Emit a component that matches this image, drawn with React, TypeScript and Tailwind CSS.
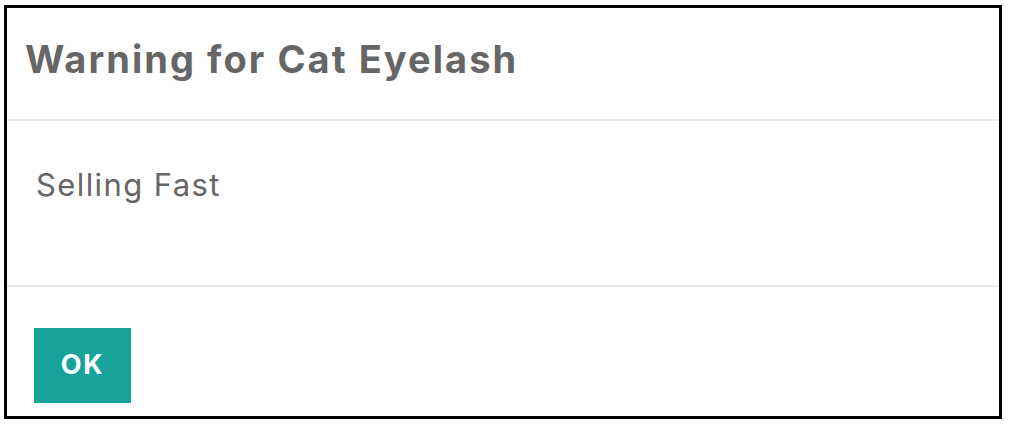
/**
 * Warning dialog — single alert card with title, message and OK action.
 */
export default function App() {
  return (
    <div className="h-[428px] w-[1012px] bg-white pl-[4px] pt-[5px] font-['Inter',sans-serif]">
      <div className="flex h-[414px] w-[998px] flex-col border-[3px] border-black bg-white">
        {/* Header */}
        <div className="h-[113px] border-b-2 border-[#e6e7eb] pl-[18px] pt-[27px]">
          <h1 className="text-[38px] font-bold leading-[48px] tracking-[0.054em] text-[#666666]">
            Warning for Cat Eyelash
          </h1>
        </div>

        {/* Body */}
        <div className="h-[166px] border-b-2 border-[#e6e7eb] pl-[29px] pt-[44px]">
          <p className="text-[31px] leading-[40px] tracking-[0.045em] text-[#666666]">Selling Fast</p>
        </div>

        {/* Footer */}
        <div className="flex-1 pl-[27px] pt-[41px]">
          <button className="flex h-[75px] w-[97px] items-center justify-center bg-[#17a29c] text-[27px] font-bold tracking-[0.06em] text-white">
            OK
          </button>
        </div>
      </div>
    </div>
  );
}
